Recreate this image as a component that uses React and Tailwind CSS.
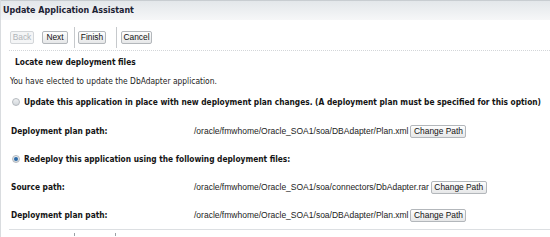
const label = "font-['DejaVu_Sans_Condensed','DejaVu_Sans',sans-serif]";
const arial = "font-['Liberation_Sans',Arial,sans-serif]";

function Btn({ children, w, disabled }) {
  return (
    <div
      className={`${arial} ${w} flex h-[13px] items-center justify-center rounded-[2px] border text-[8.4px] leading-none ${
        disabled
          ? "border-[#d3d6d9] bg-[#f4f5f6] text-[#b0b4b8]"
          : "border-[#b3b7bb] bg-gradient-to-b from-[#fefefe] to-[#e6e7e8] text-[#111]"
      }`}
    >
      {children}
    </div>
  );
}

function PathRow({ name, path, h }) {
  return (
    <div className={`flex ${h} items-center`}>
      <div className={`${label} w-[193px] pl-[10px] text-[8.3px] font-bold text-[#141414]`}>{name}</div>
      <div className={`${arial} text-[8.5px] text-[#222]`}>{path}</div>
      <div className="ml-[2px]">
        <Btn w="w-[56px]">Change Path</Btn>
      </div>
    </div>
  );
}

function Radio({ checked }) {
  return (
    <span className="flex h-[8px] w-[8px] items-center justify-center rounded-full border border-[#b4b9be] bg-gradient-to-b from-[#eef0f2] to-[#d3d8dc]">
      {checked && <span className="h-[4px] w-[4px] rounded-full bg-[#2a6aa8]" />}
    </span>
  );
}

export default function App() {
  return (
    <div className="h-[237px] w-[550px] overflow-hidden border-l border-[#d9dcdf] bg-white">
      <div className="flex h-[20px] items-center border-t border-[#c8cdd1] bg-gradient-to-b from-[#e3e7ea] to-[#f6f7f8] pl-[2px]">
        <span className={`${label} text-[8.9px] font-bold text-[#1c2233]`}>Update Application Assistant</span>
      </div>

      <div className="mt-[7px] flex h-[21px] items-center pl-[9px]">
        <Btn w="w-[24px]" disabled>Back</Btn>
        <div className="ml-[8px]"><Btn w="w-[26px]">Next</Btn></div>
        <div className="ml-[6px] h-[21px] w-px bg-[#c6c9cc]" />
        <div className="ml-[3px]"><Btn w="w-[28px]">Finish</Btn></div>
        <div className="ml-[10px] h-[21px] w-px bg-[#c6c9cc]" />
        <div className="ml-[4px]"><Btn w="w-[31px]">Cancel</Btn></div>
      </div>

      <div className="ml-[8px] mt-[2px] border-t border-dotted border-[#d3d6d9]" />

      <div className={`${label} text-[#141414]`}>
        <div className="flex h-[22px] items-center pl-[14px] text-[8.3px] font-bold">Locate new deployment files</div>
        <div className="flex h-[16px] items-center pl-[9px] text-[8.4px] text-[#222]">
          You have elected to update the DbAdapter application.
        </div>
        <div className="flex h-[26px] items-center gap-[4px] pl-[11px] text-[8.3px] font-bold">
          <Radio />
          <span>Update this application in place with new deployment plan changes. (A deployment plan must be specified for this option)</span>
        </div>
      </div>

      <PathRow h="h-[32px]" name="Deployment plan path:" path="/oracle/fmwhome/Oracle_SOA1/soa/DBAdapter/Plan.xml" />

      <div className={`${label} flex h-[24px] items-center gap-[4px] pl-[11px] text-[8.3px] font-bold text-[#141414]`}>
        <Radio checked />
        <span>Redeploy this application using the following deployment files:</span>
      </div>

      <PathRow h="h-[32px]" name="Source path:" path="/oracle/fmwhome/Oracle_SOA1/soa/connectors/DbAdapter.rar" />
      <PathRow h="h-[24px]" name="Deployment plan path:" path="/oracle/fmwhome/Oracle_SOA1/soa/DBAdapter/Plan.xml" />

      <div className="ml-[8px] mt-[2px] border-t border-[#dcdfe2]" />
      <div className="relative h-[6px]">
        <span className="absolute left-[73px] top-[3px] h-[3px] w-px bg-[#9aa0a5]" />
        <span className="absolute left-[114px] top-[3px] h-[3px] w-px bg-[#9aa0a5]" />
      </div>
    </div>
  );
}
